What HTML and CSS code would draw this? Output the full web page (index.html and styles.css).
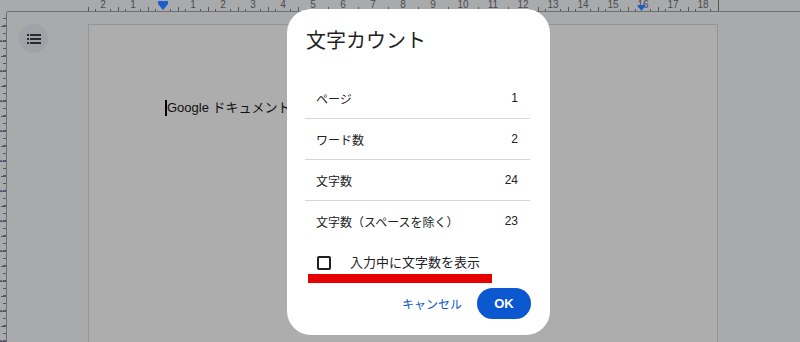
FILE: index.html
```html
<!DOCTYPE html>
<html lang="ja">
<head>
  <meta charset="UTF-8" />
  <title>文字カウント</title>
  <meta name="viewport" content="width=device-width, initial-scale=1.0" />
  <link rel="stylesheet" href="styles.css">
</head>
<body>
  <div class="app">
    <div class="corner"></div>

    <div class="ruler-top" aria-hidden="true">
      <div class="scale">
        <span class="cm">2</span>
        <span class="cm">1</span>
        <span class="cm marker-cell">
          <svg class="indent" width="10" height="9" viewBox="0 0 10 9"><path d="M0 0H10V3L5 9L0 3Z" fill="#1a5dcc"/></svg>
        </span>
        <span class="cm">1</span>
        <span class="cm">2</span>
        <span class="cm">3</span>
        <span class="cm">4</span>
        <span class="cm">5</span>
        <span class="cm">6</span>
        <span class="cm">7</span>
        <span class="cm">8</span>
        <span class="cm">9</span>
        <span class="cm">10</span>
        <span class="cm">11</span>
        <span class="cm">12</span>
        <span class="cm">13</span>
        <span class="cm">14</span>
        <span class="cm">15</span>
        <span class="cm marker-right">16
          <svg class="indent-right" width="9" height="6" viewBox="0 0 9 6"><path d="M0 0H9L4.5 6Z" fill="#1a5dcc"/></svg>
        </span>
        <span class="cm">17</span>
        <span class="cm">18</span>
      </div>
    </div>

    <div class="ruler-left" aria-hidden="true"></div>

    <div class="workspace">
      <div class="side">
        <button class="outline-btn" aria-label="Document outline">
          <svg width="14" height="10" viewBox="0 0 14 10">
            <rect x="0" y="0" width="2" height="2" fill="#2b2b2b"/>
            <rect x="3" y="0" width="11" height="2" fill="#2b2b2b"/>
            <rect x="0" y="4" width="2" height="2" fill="#2b2b2b"/>
            <rect x="3" y="4" width="11" height="2" fill="#2b2b2b"/>
            <rect x="0" y="8" width="2" height="2" fill="#2b2b2b"/>
            <rect x="3" y="8" width="11" height="2" fill="#2b2b2b"/>
          </svg>
        </button>
      </div>
      <div class="page">
        <p class="doc-text"><span class="caret"></span>Google ドキュメントで</p>
      </div>
    </div>
  </div>

  <div class="dialog" role="dialog" aria-label="文字カウント">
    <h2>文字カウント</h2>

    <div class="stats">
      <div class="stat"><span>ページ</span><span class="num">1</span></div>
      <div class="stat"><span>ワード数</span><span class="num">2</span></div>
      <div class="stat"><span>文字数</span><span class="num">24</span></div>
      <div class="stat"><span>文字数（スペースを除く）</span><span class="num">23</span></div>
    </div>

    <label class="check-row">
      <span class="box"></span>
      <span>入力中に文字数を表示</span>
    </label>
    <div class="highlight"></div>

    <div class="actions">
      <button class="cancel">キャンセル</button>
      <button class="ok">OK</button>
    </div>
  </div>
</body>
</html>
```

FILE: styles.css
```css
body {
  margin: 0;
  width: 800px;
  height: 342px;
  overflow: hidden;
  background: #a9aaac;
  font-family: "Liberation Sans", "Noto Sans CJK JP", sans-serif;
  color: #202124;
}

.app {
  display: grid;
  grid-template-columns: 7px 1fr;
  grid-template-rows: 12px 330px;
  height: 342px;
}

/* Rulers */
.ruler-top {
  border-bottom: 1px solid #6f7073;
  box-sizing: border-box;
  padding-left: 81px;
}

.scale {
  display: flex;
  height: 11px;
}

.cm {
  position: relative;
  width: 30px;
  flex-shrink: 0;
  text-align: center;
  font-size: 10px;
  line-height: 9px;
  color: #4b4b4d;
  background-image:
    linear-gradient(#56575a, #56575a),
    linear-gradient(#56575a, #56575a),
    linear-gradient(#56575a, #56575a);
  background-size: 1px 4px, 1px 2px, 1px 2px;
  background-position: 0 100%, 7px 100%, 22px 100%;
  background-repeat: no-repeat;
}

.cm:last-child {
  box-shadow: 1px 0 0 0 #56575a;
}

.indent {
  position: absolute;
  left: 10px;
  top: 1px;
}

.indent-right {
  position: absolute;
  left: 9px;
  top: 5px;
}

.ruler-left {
  border-right: 1px solid #6f7073;
  background-image:
    repeating-linear-gradient(to bottom, transparent 0 6px, #56575a 6px 7px, transparent 7px 7.5px),
    repeating-linear-gradient(to bottom, transparent 0 14px, #56575a 14px 15px),
    repeating-linear-gradient(to bottom, transparent 0 28px, #6a5a8c 28px 30px);
  background-size: 3px 100%, 5px 100%, 2px 100%;
  background-position: right top, right top, left top;
  background-repeat: no-repeat;
}

.workspace {
  display: flex;
  padding-top: 12px;
}

.side {
  width: 81px;
  flex-shrink: 0;
}

.outline-btn {
  margin: 0 0 0 12px;
  width: 29px;
  height: 29px;
  border: none;
  border-radius: 50%;
  background: #9fa2a7;
  padding: 0;
  display: flex;
  align-items: center;
  justify-content: center;
}

.page {
  width: 630px;
  box-sizing: border-box;
  background: #adadad;
  border: 1px solid #959595;
  border-bottom: none;
  padding: 75px 0 0 76px;
}

.doc-text {
  margin: 0;
  font-size: 13px;
  line-height: 16px;
  color: #111;
  display: flex;
  align-items: center;
}

.caret {
  width: 2px;
  height: 16px;
  background: #000;
}

/* Dialog */
.dialog {
  position: absolute;
  left: 287px;
  top: 9px;
  width: 263px;
  height: 326px;
  box-sizing: border-box;
  background: #fff;
  border-radius: 24px;
  padding: 19px 20px 0 18px;
}

.dialog h2 {
  margin: 0 0 0 1px;
  font-size: 20px;
  font-weight: 400;
  line-height: 26px;
  color: #1f1f1f;
}

.stats {
  margin-top: 24px;
}

.stat {
  display: flex;
  justify-content: space-between;
  align-items: center;
  height: 40px;
  padding: 0 12px 0 11px;
  border-bottom: 1px solid #d6d6d6;
  font-size: 12px;
}

.stat:last-child {
  border-bottom: none;
}

.num {
  font-size: 12px;
}

.check-row {
  display: flex;
  align-items: center;
  gap: 19px;
  margin: 14px 0 0 12px;
  font-size: 13px;
  line-height: 16px;
}

.box {
  width: 14px;
  height: 14px;
  box-sizing: border-box;
  border: 2px solid #1f1f1f;
  border-radius: 2px;
}

.highlight {
  width: 184px;
  height: 9px;
  margin: 3px 0 0 3px;
  background: #e60000;
}

.actions {
  display: flex;
  justify-content: flex-end;
  align-items: center;
  gap: 15px;
  margin-top: 5px;
  margin-right: -1px;
}

.actions button {
  font-family: "Liberation Sans", "Noto Sans CJK JP", sans-serif;
  border: none;
  cursor: pointer;
}

.cancel {
  background: none;
  color: #0b57d0;
  font-size: 12px;
  padding: 0;
}

.ok {
  width: 54px;
  height: 31px;
  border-radius: 16px;
  background: #0b57d0;
  color: #fff;
  font-size: 13px;
  font-weight: 700;
}
```
